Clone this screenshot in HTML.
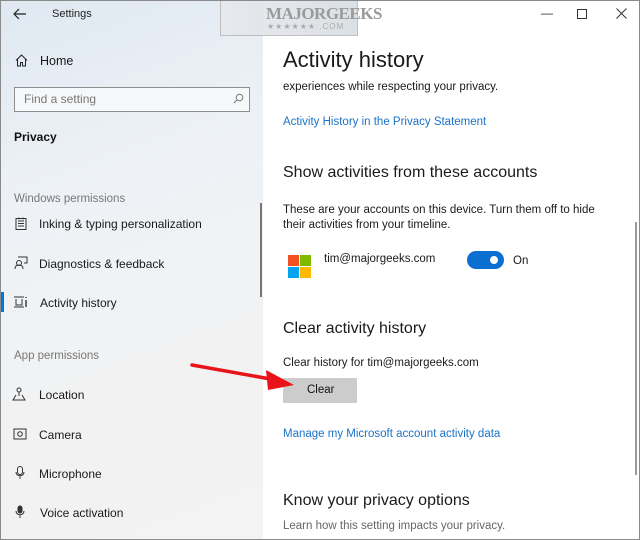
<!DOCTYPE html>
<html><head><meta charset="utf-8">
<style>
*{margin:0;padding:0;box-sizing:border-box}
body{width:640px;height:540px;overflow:hidden;font-family:"Liberation Sans",sans-serif;position:relative;background:#fff;color:#000}
.side{position:absolute;left:0;top:0;width:263px;height:540px;background:linear-gradient(160deg,#dfe8f1 0%,#eef2f6 35%,#f2f2f2 70%,#f3f3f3 100%)}
.t{position:absolute;white-space:nowrap}
.nav{font-size:12px;color:#1a1a1a}
.grp{font-size:11.5px;color:#777}
.ic{position:absolute}
.main .t{color:#1a1a1a}
.h1{font-size:22px;font-weight:300;color:#111}
.h2{font-size:16px;color:#111}
.p{font-size:11.5px}
.lnk{font-size:11.5px;color:#1a73c7 !important}
.border{position:absolute;left:0;top:0;width:640px;height:540px;border:1px solid #8a8a8a;pointer-events:none}
</style></head><body>
<div class="side">
  <svg class="ic" style="left:13px;top:8px" width="14" height="12" viewBox="0 0 14 12"><path d="M13 6H2M6 1L1 6l5 5" fill="none" stroke="#222" stroke-width="1.2"/></svg>
  <div class="t" style="left:52px;top:8px;font-size:11px;color:#222">Settings</div>
  <svg class="ic" style="left:15px;top:54px" width="13" height="13" viewBox="0 0 13 13"><path d="M1 6.5L6.5 1 12 6.5M2.5 5v7h3V8.5h2V12h3V5" fill="none" stroke="#222" stroke-width="1"/></svg>
  <div class="t nav" style="left:40px;top:54px;font-size:12.5px">Home</div>
  <div style="position:absolute;left:14px;top:87px;width:236px;height:25px;border:1.5px solid #8e8e8e;background:#f7f8f9"></div>
  <div class="t" style="left:24px;top:92px;font-size:12px;color:#777">Find a setting</div>
  <svg class="ic" style="left:233px;top:93px" width="11" height="11" viewBox="0 0 11 11"><circle cx="6.5" cy="4.5" r="3.3" fill="none" stroke="#777"/><path d="M4 7L1 10" stroke="#777"/></svg>
  <div class="t" style="left:14px;top:130px;font-size:12px;font-weight:bold;color:#111">Privacy</div>
  <div class="t grp" style="left:14px;top:193px">Windows permissions</div>
  <svg class="ic" style="left:15px;top:217px" width="12" height="13" viewBox="0 0 12 13"><rect x="1" y="1.5" width="10" height="11" fill="none" stroke="#333"/><path d="M3 4h6M3 6.5h6M3 9h6M4 0.5v2M8 0.5v2" stroke="#333"/></svg>
  <div class="t nav" style="left:39px;top:217px">Inking &amp; typing personalization</div>
  <svg class="ic" style="left:14px;top:256px" width="14" height="14" viewBox="0 0 14 14"><circle cx="5" cy="7" r="2.5" fill="none" stroke="#333"/><path d="M1 13c0-3 2-4 4-4s4 1 4 4M4 1h9v6h-3" fill="none" stroke="#333"/></svg>
  <div class="t nav" style="left:39px;top:257px">Diagnostics &amp; feedback</div>
  <div style="position:absolute;left:0;top:292px;width:4px;height:20px;background:#0078d7"></div>
  <svg class="ic" style="left:14px;top:296px" width="14" height="12" viewBox="0 0 14 12"><path d="M0 1h10M0 11h10M2 3v6h6V3" fill="none" stroke="#333"/><path d="M12 1v1M12 4v7" stroke="#333" stroke-width="1.4"/></svg>
  <div class="t nav" style="left:40px;top:296px">Activity history</div>
  <div style="position:absolute;left:260px;top:203px;width:2px;height:94px;background:#777"></div>
  <div class="t grp" style="left:14px;top:350px">App permissions</div>
  <svg class="ic" style="left:12px;top:387px" width="14" height="14" viewBox="0 0 14 14"><circle cx="7" cy="3" r="2" fill="none" stroke="#333"/><path d="M7 5v4M4 8L1 13h12L10 8" fill="none" stroke="#333"/></svg>
  <div class="t nav" style="left:39px;top:388px">Location</div>
  <svg class="ic" style="left:13px;top:427px" width="14" height="13" viewBox="0 0 14 13"><rect x="1" y="2" width="12" height="10" fill="none" stroke="#333"/><circle cx="7" cy="7" r="2.3" fill="none" stroke="#333"/></svg>
  <div class="t nav" style="left:39px;top:428px">Camera</div>
  <svg class="ic" style="left:15px;top:466px" width="10" height="14" viewBox="0 0 10 14"><rect x="2.5" y="0.5" width="5" height="8" rx="2.5" fill="none" stroke="#333"/><path d="M1 6c0 5 8 5 8 0M5 10.5V13" fill="none" stroke="#333"/></svg>
  <div class="t nav" style="left:39px;top:467px">Microphone</div>
  <svg class="ic" style="left:15px;top:505px" width="10" height="14" viewBox="0 0 10 14"><rect x="2.5" y="0.5" width="5" height="8" rx="2.5" fill="#333"/><path d="M1 6c0 5 8 5 8 0M5 10.5V13" fill="none" stroke="#333"/></svg>
  <div class="t nav" style="left:40px;top:506px">Voice activation</div>
</div>
<div style="position:absolute;left:220px;top:0;width:138px;height:36px;background:linear-gradient(90deg,#e6eaee,#d8dde2);border:1px solid #bbb;border-top:none;opacity:.9"></div>
<div class="t" style="left:266px;top:4px;font-size:17px;font-weight:bold;color:#9a9a9a;font-family:'Liberation Serif',serif;letter-spacing:-0.5px">MAJORGEEKS</div>
<div class="t" style="left:267px;top:22px;font-size:8px;color:#aaa;letter-spacing:1px">★★★★★★ .COM</div>
<div class="main">
  <div class="t" style="left:541px;top:6px;font-size:12px;color:#333">—</div>
  <div style="position:absolute;left:577px;top:9px;width:10px;height:10px;border:1px solid #333"></div>
  <svg style="position:absolute;left:616px;top:8px" width="11" height="11" viewBox="0 0 11 11"><path d="M0.5 0.5L10.5 10.5M10.5 0.5L0.5 10.5" stroke="#333" stroke-width="1"/></svg>
  <div class="t h1" style="left:283px;top:47px">Activity history</div>
  <div class="t p" style="left:283px;top:81px">experiences while respecting your privacy.</div>
  <div class="t lnk" style="left:283px;top:116px">Activity History in the Privacy Statement</div>
  <div class="t h2" style="left:283px;top:164px">Show activities from these accounts</div>
  <div class="t p" style="left:283px;top:204px">These are your accounts on this device. Turn them off to hide</div>
  <div class="t p" style="left:283px;top:219px">their activities from your timeline.</div>
  <div style="position:absolute;left:288px;top:255px;width:11px;height:11px;background:#f25022"></div>
  <div style="position:absolute;left:300px;top:255px;width:11px;height:11px;background:#7fba00"></div>
  <div style="position:absolute;left:288px;top:267px;width:11px;height:11px;background:#00a4ef"></div>
  <div style="position:absolute;left:300px;top:267px;width:11px;height:11px;background:#ffb900"></div>
  <div class="t p" style="left:324px;top:253px">tim@majorgeeks.com</div>
  <div style="position:absolute;left:467px;top:251px;width:37px;height:18px;border-radius:9px;background:#0a6fd0"></div>
  <div style="position:absolute;left:490px;top:256px;width:8px;height:8px;border-radius:50%;background:#fff"></div>
  <div class="t p" style="left:513px;top:255px">On</div>
  <div class="t h2" style="left:283px;top:320px">Clear activity history</div>
  <div class="t p" style="left:283px;top:357px">Clear history for tim@majorgeeks.com</div>
  <div style="position:absolute;left:283px;top:378px;width:74px;height:25px;background:#cccccc"></div>
  <div class="t p" style="left:307px;top:384px;color:#111">Clear</div>
  <div class="t lnk" style="left:283px;top:428px">Manage my Microsoft account activity data</div>
  <div class="t h2" style="left:283px;top:492px">Know your privacy options</div>
  <div class="t p" style="left:283px;top:520px;color:#666 !important">Learn how this setting impacts your privacy.</div>
  <div style="position:absolute;left:635px;top:222px;width:2px;height:253px;background:#999"></div>
</div>
<svg style="position:absolute;left:188px;top:360px" width="110" height="35" viewBox="0 0 110 35"><path d="M4 5L88 20" stroke="#e8141a" stroke-width="3.5" stroke-linecap="round"/><path d="M78 10L106 25L80 30Z" fill="#e8141a"/></svg>
<div class="border"></div>
</body></html>
